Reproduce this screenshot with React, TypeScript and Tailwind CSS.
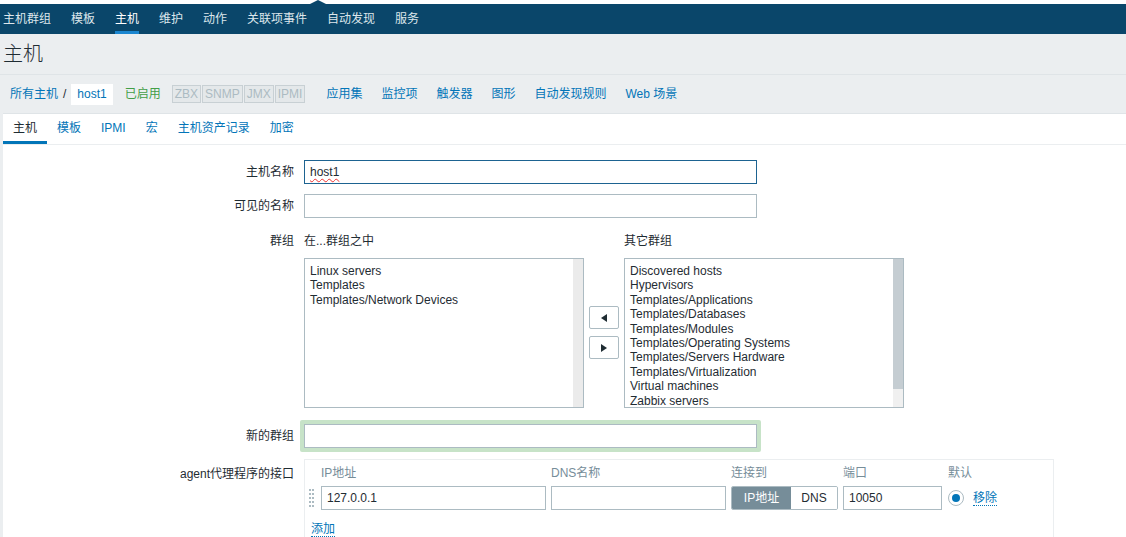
import React from 'react';

const font = { fontFamily: '"Liberation Sans", Arial, "Noto Sans CJK SC", sans-serif' };

const topMenu = ['主机群组', '模板', '主机', '维护', '动作', '关联项事件', '自动发现', '服务'];
const hostLinks = ['应用集', '监控项', '触发器', '图形', '自动发现规则', 'Web 场景'];
const tabs = ['主机', '模板', 'IPMI', '宏', '主机资产记录', '加密'];
const inGroups = ['Linux servers', 'Templates', 'Templates/Network Devices'];
const otherGroups = [
  'Discovered hosts',
  'Hypervisors',
  'Templates/Applications',
  'Templates/Databases',
  'Templates/Modules',
  'Templates/Operating Systems',
  'Templates/Servers Hardware',
  'Templates/Virtualization',
  'Virtual machines',
  'Zabbix servers',
];

function Label({ children, className = '' }: { children: React.ReactNode; className?: string }) {
  return <div className={`w-[301px] shrink-0 pr-[10px] text-right text-[#1f2c33] ${className}`}>{children}</div>;
}

export default function App() {
  return (
    <div className="w-[1126px] h-[537px] overflow-hidden bg-white text-[12px] text-[#1f2c33]" style={font}>
      {/* top strip with marker */}
      <div className="relative h-[4px] bg-white">
        <div className="absolute left-[310px] top-0 w-0 h-0 border-l-[8px] border-r-[8px] border-b-[4px] border-l-transparent border-r-transparent border-b-[#0a466a]" />
      </div>
      <nav className="h-[30px] bg-[#0a466a] flex items-stretch pl-[3px]">
        {topMenu.map((m) => (
          <div
            key={m}
            className={`mr-[20px] flex items-center border-b-[3px] pt-[3px] ${
              m === '主机' ? 'text-white border-[#1b86d0]' : 'text-[#dde6ec] border-transparent'
            }`}
          >
            {m}
          </div>
        ))}
      </nav>

      <div className="bg-[#ebeef0]">
        <div className="h-[41px] flex items-center pl-[3px] border-b border-[#dfe4e7] text-[20px] font-light text-[#1f2c33]">主机</div>
        <div className="h-[38px] flex items-center pl-[10px]">
          <span className="text-[#0275b8]">所有主机</span>
          <span className="mx-[5px] text-[#1f2c33]">/</span>
          <span className="bg-white px-[6px] h-[21px] flex items-center text-[#0275b8]">host1</span>
          <span className="ml-[12px] text-[#429e47]">已启用</span>
          <div className="ml-[11px] flex h-[18px]">
            {['ZBX', 'SNMP', 'JMX', 'IPMI'].map((s) => (
              <span
                key={s}
                className="border border-[#c8d0d4] bg-[#e4e8ea] text-[#acbbc2] px-[2px] mr-[1px] flex items-center leading-none"
              >
                {s}
              </span>
            ))}
          </div>
          <div className="ml-[20px] flex gap-[19px] text-[#0275b8]">
            {hostLinks.map((l) => (
              <span key={l}>{l}</span>
            ))}
          </div>
        </div>
      </div>

      <div className="bg-[#ebeef0] pl-[3px]">
        <div className="bg-white border-t border-[#dfe4e7] h-[424px]">
          <div className="h-[31px] flex border-b border-[#ebeef0]">
            {tabs.map((t) => (
              <div
                key={t}
                className={`flex items-center px-[10px] border-b-[3px] ${
                  t === '主机' ? 'border-[#0275b8] text-[#1f2c33] w-[44px] justify-center px-0' : 'border-transparent text-[#0275b8]'
                }`}
              >
                {t}
              </div>
            ))}
          </div>

          <div className="pt-[15px]">
            <div className="flex items-center h-[24px]">
              <Label>主机名称</Label>
              <div className="w-[453px] h-[24px] border border-[#1d6391] flex items-center px-[5px]">
                <span className="underline decoration-wavy decoration-[#e33] decoration-[1px] underline-offset-[2px]">host1</span>
              </div>
            </div>
            <div className="flex items-center h-[24px] mt-[10px]">
              <Label>可见的名称</Label>
              <div className="w-[453px] h-[24px] border border-[#acbbc2]" />
            </div>

            <div className="flex items-center h-[24px] mt-[11px]">
              <Label>群组</Label>
              <div className="w-[320px]">在...群组之中</div>
              <div>其它群组</div>
            </div>

            <div className="flex mt-[5px]">
              <div className="w-[301px] shrink-0" />
              <div className="w-[280px] h-[150px] border border-[#acbbc2] flex">
                <div className="flex-1 pl-[5px] pt-[5px] leading-[14.4px]">
                  {inGroups.map((g) => (
                    <div key={g}>{g}</div>
                  ))}
                </div>
                <div className="w-[10px] bg-[#ebebeb]" />
              </div>
              <div className="w-[40px] flex flex-col items-center pt-[48px] gap-[7px]">
                <button className="w-[30px] h-[23px] border border-[#acbbc2] rounded-[2px] bg-white flex items-center justify-center">
                  <svg width="6" height="8" viewBox="0 0 6 8"><path d="M6 0 L0 4 L6 8 Z" fill="#1f2c33" /></svg>
                </button>
                <button className="w-[30px] h-[23px] border border-[#acbbc2] rounded-[2px] bg-white flex items-center justify-center">
                  <svg width="6" height="8" viewBox="0 0 6 8"><path d="M0 0 L6 4 L0 8 Z" fill="#1f2c33" /></svg>
                </button>
              </div>
              <div className="w-[280px] h-[150px] border border-[#acbbc2] flex overflow-hidden">
                <div className="flex-1 pl-[5px] pt-[5px] leading-[14.4px]">
                  {otherGroups.map((g) => (
                    <div key={g}>{g}</div>
                  ))}
                </div>
                <div className="w-[10px] bg-[#f0f0f0] flex flex-col">
                  <div className="h-[130px] bg-[#c5cdd2]" />
                </div>
              </div>
            </div>

            <div className="flex items-center mt-[12px] h-[32px]">
              <Label>新的群组</Label>
              <div className="-ml-[4px] w-[461px] h-[32px] bg-[#c7e3c8] rounded-[2px] p-[4px]">
                <div className="w-full h-full bg-white border border-[#acbbc2]" />
              </div>
            </div>

            <div className="flex mt-[7px]">
              <Label className="pt-[6px]">agent代理程序的接口</Label>
              <div className="w-[750px] h-[80px] border border-[#ebeef0] border-b-0 pl-[4px]">
                <div className="flex h-[26px] items-center text-[#768d99]">
                  <span className="ml-[12px] w-[230px]">IP地址</span>
                  <span className="w-[180px]">DNS名称</span>
                  <span className="w-[112px]">连接到</span>
                  <span className="w-[105px]">端口</span>
                  <span>默认</span>
                </div>
                <div className="flex items-center h-[24px]">
                  <div className="w-[12px] h-[20px] flex items-center">
                    <svg width="5" height="19" viewBox="0 0 5 19">
                      {[0, 4, 8, 12, 16].map((y) => (
                        <g key={y}>
                          <rect x="0" y={y} width="2" height="2" fill="#acbbc2" />
                          <rect x="3" y={y} width="2" height="2" fill="#acbbc2" />
                        </g>
                      ))}
                    </svg>
                  </div>
                  <div className="w-[225px] h-[24px] border border-[#acbbc2] flex items-center px-[5px]">127.0.0.1</div>
                  <div className="ml-[5px] w-[175px] h-[24px] border border-[#acbbc2]" />
                  <div className="ml-[5px] w-[107px] h-[24px] flex border border-[#acbbc2] rounded-[2px] overflow-hidden">
                    <div className="w-[59px] bg-[#768d99] text-white flex items-center justify-center">IP地址</div>
                    <div className="flex-1 bg-white flex items-center justify-center">DNS</div>
                  </div>
                  <div className="ml-[5px] w-[99px] h-[24px] border border-[#acbbc2] flex items-center px-[5px]">10050</div>
                  <div className="ml-[6px] w-[16px] h-[16px] rounded-full border border-[#acbbc2] flex items-center justify-center">
                    <div className="w-[8px] h-[8px] rounded-full bg-[#0275b8]" />
                  </div>
                  <span className="ml-[9px] text-[#0275b8] border-b border-dotted border-[#0275b8] leading-[14px]">移除</span>
                </div>
                <div className="mt-[10px] ml-[2px]">
                  <span className="text-[#0275b8] border-b border-dotted border-[#0275b8] leading-[14px]">添加</span>
                </div>
              </div>
            </div>
          </div>
        </div>
      </div>
    </div>
  );
}
